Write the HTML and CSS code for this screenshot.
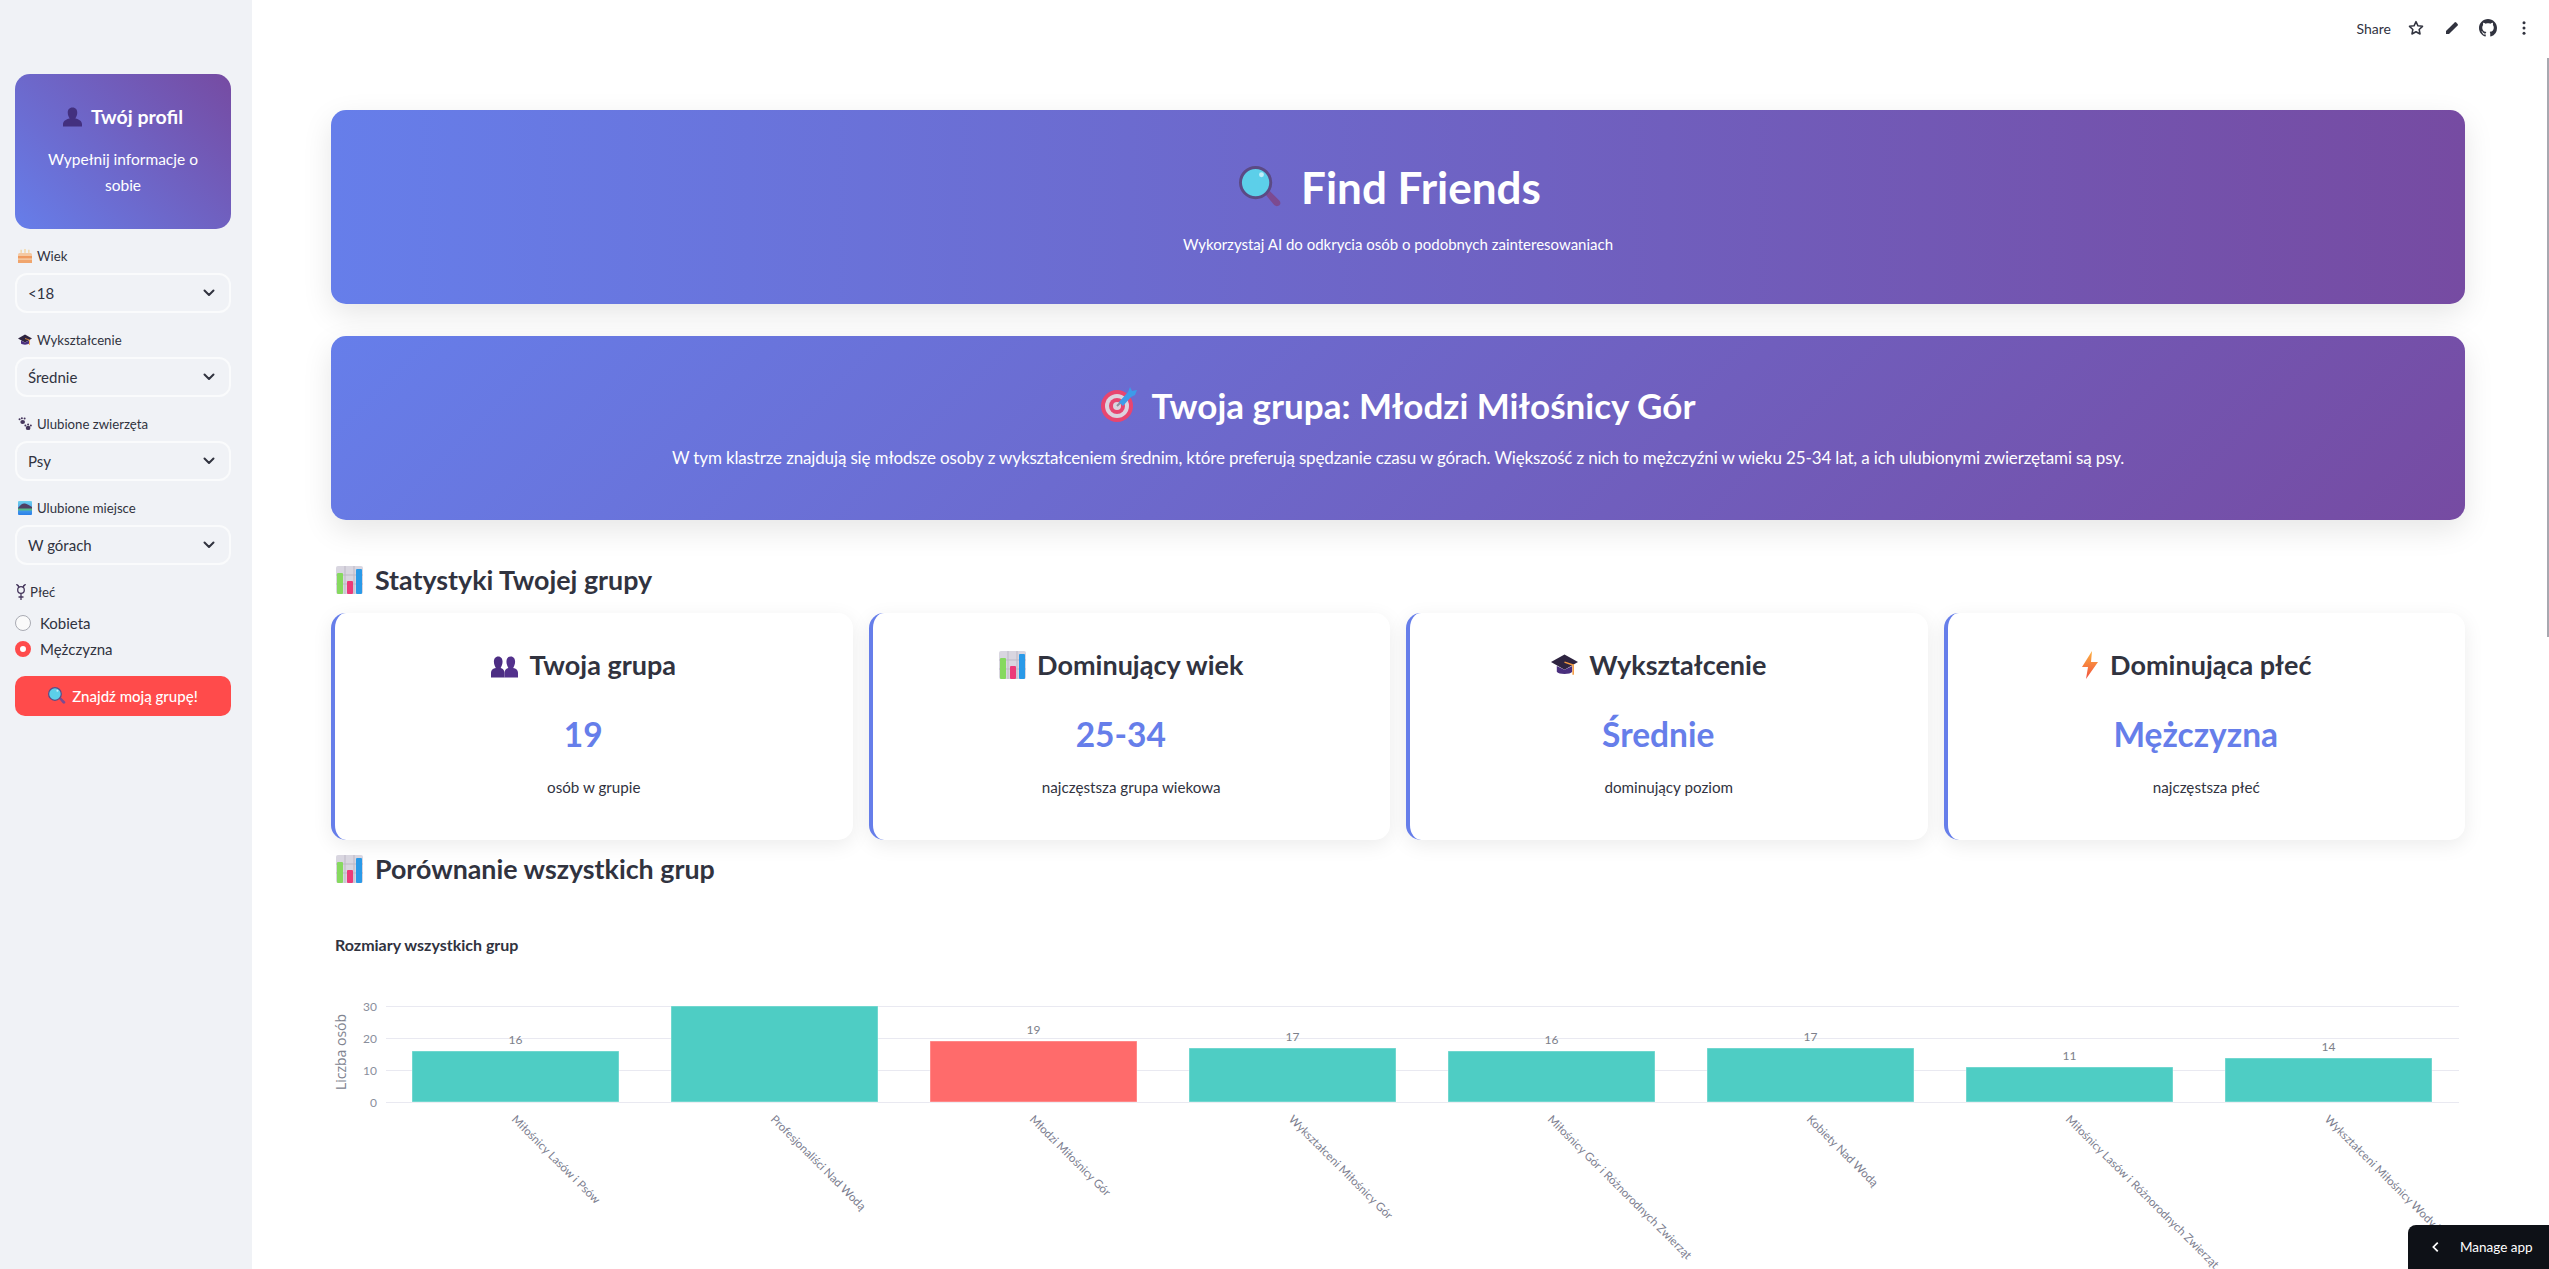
FILE: index.html
```html
<!DOCTYPE html>
<html lang="pl">
<head>
<meta charset="utf-8">
<title>Find Friends</title>
<link rel="stylesheet" href="styles.css">
</head>
<body>
<svg class="sprite" aria-hidden="true">
  <defs>
    <linearGradient id="bolt" x1="0" y1="0" x2="0" y2="1"><stop offset="0" stop-color="#fbb040"/><stop offset="1" stop-color="#f2503f"/></linearGradient>
    <linearGradient id="sky" x1="0" y1="0" x2="0" y2="1"><stop offset="0" stop-color="#6fd0ee"/><stop offset="1" stop-color="#2b7fe8"/></linearGradient>
  </defs>
  <symbol id="i-search" viewBox="0 0 44 44">
    <path d="M27 29l4-4 10 10c2 2 1.500 4 .5 5s-3.500 2-5.500 0z" fill="#7c4a90"/>
    <circle cx="17" cy="17" r="15.500" fill="#5ccfe9" stroke="#5b4a84" stroke-width="3"/>
    <circle cx="23" cy="9" r="2.500" fill="#bfeef8"/>
  </symbol>
  <symbol id="i-target" viewBox="0 0 36 36">
    <circle cx="16" cy="20" r="16" fill="#e8456f"/>
    <circle cx="16" cy="20" r="12" fill="#dcd3de"/>
    <circle cx="16" cy="20" r="8" fill="#e8456f"/>
    <circle cx="16" cy="20" r="4" fill="#dcd3de"/>
    <path d="M16 20L27 9" stroke="#8a8f9c" stroke-width="2"/>
    <path d="M18 16L27 6l2-5 2 4 5-1-2 5-4 2-8 9z" fill="#3d9be9"/>
  </symbol>
  <symbol id="i-chart" viewBox="0 0 27 28">
    <rect width="27" height="28" rx="2" fill="#d9d6e0"/>
    <path d="M9 0v28M18 0v28M0 9h27M0 18h27" stroke="#bdb9c6" stroke-width="1"/>
    <rect x="1" y="7" width="6" height="21" rx="1" fill="#86d95f"/>
    <rect x="11" y="15" width="6" height="13" rx="1" fill="#ec3a79"/>
    <rect x="20" y="3" width="6" height="25" rx="1" fill="#2a9ae8"/>
  </symbol>
  <symbol id="i-people" viewBox="0 0 28 22">
    <path d="M7.500 0c3 0 4.500 2.500 4.500 5.500S10.500 11 10 12c2 .5 4 2 4 5v5H0v-5c0-3 2-4.500 5-5-.5-1-2-3.500-2-6.500S4.500 0 7.500 0z" fill="#4c2d83"/>
    <path d="M20.500 0c3 0 4.500 2.500 4.500 5.500S23.500 11 23 12c3 .5 5 2 5 5v5H14v-5c0-3 2-4.500 4-5-.5-1-2-3.500-2-6.500S17.500 0 20.500 0z" fill="#53318c"/>
  </symbol>
  <symbol id="i-person" viewBox="0 0 20 20">
    <path d="M10 0c3.500 0 5 2.500 5 5.500S13.500 10.500 13 11.500c4 .8 7 3 7 6V20H0v-2.500c0-3 3-5.200 7-6-.5-1-2-3-2-6S6.500 0 10 0z" fill="#43307f"/>
  </symbol>
  <symbol id="i-cap" viewBox="0 0 28 28">
    <path d="M14 3L28 11 14 19 0 11z" fill="#2e2440"/>
    <path d="M6 15v6c2 3 14 3 16 0v-6l-8 4z" fill="#4a2f7e"/>
    <path d="M14 11l9 3v10" fill="none" stroke="#f59a3e" stroke-width="1.600"/>
  </symbol>
  <symbol id="i-bolt" viewBox="0 0 18 28">
    <path d="M11 0L1 16h6l-2 12 12-17h-7z" fill="url(#bolt)"/>
  </symbol>
  <symbol id="i-cake" viewBox="0 0 18 18">
    <path d="M4 1v4M9 0v5M14 1v4" stroke="#f3c063" stroke-width="1"/>
    <path d="M2 5h14a2 2 0 0 1 2 2v11H0V7a2 2 0 0 1 2-2z" fill="#f4c9a2"/>
    <rect y="9" width="18" height="3" fill="#ef9a5f"/>
    <rect y="14" width="18" height="4" fill="#f0a56d"/>
  </symbol>
  <symbol id="i-paws" viewBox="0 0 18 18">
    <g fill="#45365c">
      <ellipse cx="6" cy="6.500" rx="3" ry="2.500"/><circle cx="2" cy="3" r="1.300"/><circle cx="5" cy="1.500" r="1.300"/><circle cx="8.500" cy="2" r="1.300"/>
      <ellipse cx="13" cy="14" rx="3" ry="2.800"/><circle cx="9.500" cy="11" r="1.300"/><circle cx="13" cy="9.500" r="1.300"/><circle cx="16.500" cy="11" r="1.300"/>
    </g>
  </symbol>
  <symbol id="i-photo" viewBox="0 0 14 14">
    <rect width="14" height="14" rx="1" fill="url(#sky)"/>
    <path d="M0 7C3 3 5 2 7 2.500s4 1.500 7 3.500v2H0z" fill="#4f3f63"/>
    <rect y="7.500" width="14" height="2" fill="#55b98a"/>
  </symbol>
  <symbol id="i-gender" viewBox="0 0 12 16">
    <g fill="none" stroke="#45365c" stroke-width="1.300">
      <circle cx="6" cy="6" r="3.300"/>
      <path d="M6 9.300V16M3.500 13h5M3 1l1 2.500M9 1L8 3.500M1.500 0L3 2M10.500 0L9 2"/>
    </g>
  </symbol>
  <symbol id="i-chevron" viewBox="0 0 16 16">
    <path d="M3.500 5.500L8 10l4.500-4.500" fill="none" stroke="#31333f" stroke-width="2" stroke-linecap="round" stroke-linejoin="round"/>
  </symbol>
</svg>

<div class="app">
  <aside class="sidebar">
    <div class="profile-card">
      <h2 class="profile-title"><svg class="ic-person"><use href="#i-person"/></svg>Twój profil</h2>
      <p class="profile-text">Wypełnij informacje o sobie</p>
    </div>
    <div class="field">
      <label class="field-label"><svg class="ic-label"><use href="#i-cake"/></svg>Wiek</label>
      <div class="select"><span>&lt;18</span><svg class="ic-chevron"><use href="#i-chevron"/></svg></div>
    </div>
    <div class="field">
      <label class="field-label"><svg class="ic-label"><use href="#i-cap"/></svg>Wykształcenie</label>
      <div class="select"><span>Średnie</span><svg class="ic-chevron"><use href="#i-chevron"/></svg></div>
    </div>
    <div class="field">
      <label class="field-label"><svg class="ic-label"><use href="#i-paws"/></svg>Ulubione zwierzęta</label>
      <div class="select"><span>Psy</span><svg class="ic-chevron"><use href="#i-chevron"/></svg></div>
    </div>
    <div class="field">
      <label class="field-label"><svg class="ic-label"><use href="#i-photo"/></svg>Ulubione miejsce</label>
      <div class="select"><span>W górach</span><svg class="ic-chevron"><use href="#i-chevron"/></svg></div>
    </div>
    <div class="field field-radio">
      <label class="field-label field-label-gender"><svg class="ic-gender"><use href="#i-gender"/></svg>Płeć</label>
      <div class="radio-row"><span class="radio"></span>Kobieta</div>
      <div class="radio-row"><span class="radio radio-on"></span>Mężczyzna</div>
    </div>
    <div class="cta"><svg class="ic-cta"><use href="#i-search"/></svg>Znajdź moją grupę!</div>
  </aside>

  <main class="main">
    <header class="toolbar">
      <span class="share">Share</span>
      <svg class="tool" viewBox="0 0 24 24"><path d="M12 3.500l2.600 5.600 6.100.7-4.500 4.200 1.200 6L12 17l-5.400 3 1.200-6-4.500-4.200 6.100-.7z" fill="none" stroke="#31333f" stroke-width="2" stroke-linejoin="round"/></svg>
      <svg class="tool" viewBox="0 0 24 24"><path d="M4 20v-4L15.500 4.500a1.500 1.500 0 0 1 2 0l2 2a1.500 1.500 0 0 1 0 2L8 20z" fill="#31333f"/></svg>
      <svg class="tool" viewBox="0 0 16 16"><path fill="#31333f" d="M8 0C3.580 0 0 3.580 0 8c0 3.540 2.290 6.530 5.470 7.590.4.070.55-.17.55-.38 0-.19-.01-.82-.01-1.490-2.010.37-2.530-.49-2.690-.94-.09-.23-.48-.94-.82-1.130-.28-.15-.68-.52-.01-.53.63-.01 1.080.58 1.230.82.720 1.210 1.870.870 2.330.660.070-.520.280-.870.510-1.070-1.780-.2-3.640-.89-3.640-3.950 0-.870.310-1.590.820-2.150-.080-.2-.360-1.020.080-2.120 0 0 .670-.210 2.200.820.640-.180 1.320-.270 2-.270s1.360.090 2 .270c1.530-1.040 2.200-.820 2.200-.820.440 1.100.160 1.920.080 2.120.510.560.820 1.270.820 2.150 0 3.070-1.870 3.750-3.650 3.950.290.250.540.730.540 1.480 0 1.070-.010 1.930-.010 2.200 0 .210.150.460.550.380A8.010 8.010 0 0 0 16 8c0-4.420-3.580-8-8-8z"/></svg>
      <svg class="tool" viewBox="0 0 24 24"><g fill="#31333f"><circle cx="12" cy="5" r="2"/><circle cx="12" cy="12" r="2"/><circle cx="12" cy="19" r="2"/></g></svg>
    </header>

    <section class="hero hero-top">
      <h1 class="hero-title"><svg class="ic-hero"><use href="#i-search"/></svg>Find Friends</h1>
      <p class="hero-sub">Wykorzystaj AI do odkrycia osób o podobnych zainteresowaniach</p>
    </section>

    <section class="hero hero-group">
      <h2 class="group-title"><svg class="ic-target"><use href="#i-target"/></svg>Twoja grupa: Młodzi Miłośnicy Gór</h2>
      <p class="group-sub">W tym klastrze znajdują się młodsze osoby z wykształceniem średnim, które preferują spędzanie czasu w górach. Większość z nich to mężczyźni w wieku 25-34 lat, a ich ulubionymi zwierzętami są psy.</p>
    </section>

    <h3 class="section-title section-stats"><svg class="ic-chart"><use href="#i-chart"/></svg>Statystyki Twojej grupy</h3>

    <div class="cards">
      <article class="card">
        <h3 class="card-title"><svg class="ic-people"><use href="#i-people"/></svg>Twoja grupa</h3>
        <div class="card-value">19</div>
        <p class="card-sub">osób w grupie</p>
      </article>
      <article class="card">
        <h3 class="card-title"><svg class="ic-chart"><use href="#i-chart"/></svg>Dominujący wiek</h3>
        <div class="card-value">25-34</div>
        <p class="card-sub">najczęstsza grupa wiekowa</p>
      </article>
      <article class="card">
        <h3 class="card-title"><svg class="ic-cardcap"><use href="#i-cap"/></svg>Wykształcenie</h3>
        <div class="card-value">Średnie</div>
        <p class="card-sub">dominujący poziom</p>
      </article>
      <article class="card">
        <h3 class="card-title"><svg class="ic-bolt"><use href="#i-bolt"/></svg>Dominująca płeć</h3>
        <div class="card-value">Mężczyzna</div>
        <p class="card-sub">najczęstsza płeć</p>
      </article>
    </div>

    <h3 class="section-title section-compare"><svg class="ic-chart"><use href="#i-chart"/></svg>Porównanie wszystkich grup</h3>

    <svg class="chart" viewBox="331 889 2134 380">
      <text class="chart-title" x="335" y="951">Rozmiary wszystkich grup</text>
      <g class="grid">
        <line x1="386" x2="2459" y1="1006.500" y2="1006.500"/>
        <line x1="386" x2="2459" y1="1038.500" y2="1038.500"/>
        <line x1="386" x2="2459" y1="1070.500" y2="1070.500"/>
        <line x1="386" x2="2459" y1="1102.500" y2="1102.500"/>
      </g>
      <g class="ticks">
        <text x="377" y="1011">30</text><text x="377" y="1043">20</text><text x="377" y="1075">10</text><text x="377" y="1107">0</text>
      </g>
      <text class="axis-title" transform="translate(346 1052) rotate(-90)">Liczba osób</text>
      <g class="bars">
        <rect x="412" y="1051" width="207" height="51"/>
        <rect x="671" y="1006" width="207" height="96"/>
        <rect class="bar-me" x="930" y="1041" width="207" height="61"/>
        <rect x="1189" y="1048" width="207" height="54"/>
        <rect x="1448" y="1051" width="207" height="51"/>
        <rect x="1707" y="1048" width="207" height="54"/>
        <rect x="1966" y="1067" width="207" height="35"/>
        <rect x="2225" y="1058" width="207" height="44"/>
      </g>
      <g class="values">
        <text x="515.500" y="1044">16</text>
        <text x="1033.500" y="1034">19</text>
        <text x="1292.500" y="1041">17</text>
        <text x="1551.500" y="1044">16</text>
        <text x="1810.500" y="1041">17</text>
        <text x="2069.500" y="1060">11</text>
        <text x="2328.500" y="1051">14</text>
      </g>
      <g class="xlabels">
        <text transform="translate(511 1120) rotate(45)">Miłośnicy Lasów i Psów</text>
        <text transform="translate(770 1120) rotate(45)">Profesjonaliści Nad Wodą</text>
        <text transform="translate(1029 1120) rotate(45)">Młodzi Miłośnicy Gór</text>
        <text transform="translate(1288 1120) rotate(45)">Wykształceni Miłośnicy Gór</text>
        <text transform="translate(1547 1120) rotate(45)">Miłośnicy Gór i Różnorodnych Zwierząt</text>
        <text transform="translate(1806 1120) rotate(45)">Kobiety Nad Wodą</text>
        <text transform="translate(2065 1120) rotate(45)">Miłośnicy Lasów i Różnorodnych Zwierząt</text>
        <text transform="translate(2324 1120) rotate(45)">Wykształceni Miłośnicy Wody i</text>
      </g>
    </svg>
  </main>
</div>
<div class="scroll-thumb"></div>
<div class="manage"><svg class="manage-chev" viewBox="0 0 16 16"><path d="M10 3L5 8l5 5" fill="none" stroke="#fff" stroke-width="2"/></svg>Manage app</div>
</body>
</html>
```

FILE: styles.css
```css
* { box-sizing: border-box; }
html, body { margin: 0; height: 100%; overflow: hidden; background: #fff; }
body { font-family: "Lato", "Noto Sans", sans-serif; color: #31333f; font-size: 16px; }
h1, h2, h3, p { margin: 0; }
.sprite { position: absolute; width: 0; height: 0; }
svg { flex: none; }

.app { display: flex; height: 100vh; overflow: hidden; }

/* sidebar */
.sidebar { width: 252px; flex: none; background: #f0f2f6; padding: 74px 21px 0 15px; display: flex; flex-direction: column; gap: 17px; }
.profile-card { height: 155px; border-radius: 15px; background: linear-gradient(45deg, #667eea, #764ba2); color: #fff; text-align: center; padding: 30px 30px 0; }
.profile-title { font-size: 19.500px; line-height: 26px; font-weight: 700; display: flex; align-items: center; justify-content: center; gap: 9px; white-space: nowrap; }
.ic-person { width: 19px; height: 20px; }
.profile-text { font-size: 15.500px; line-height: 26px; margin-top: 16px; }
.field { display: flex; flex-direction: column; }
.field-label { height: 20px; margin-bottom: 7px; font-size: 13.200px; line-height: 20px; display: flex; align-items: center; gap: 5px; padding-left: 3px; }
.ic-label { width: 14px; height: 14px; }
.select { height: 40px; border: 2px solid #fafbfc; border-radius: 12px; padding: 0 12px 0 11px; display: flex; align-items: center; justify-content: space-between; font-size: 15px; }
.ic-chevron { width: 16px; height: 16px; }
.field-label-gender { padding-left: 0; gap: 3px; margin-bottom: 8px; }
.ic-gender { width: 12px; height: 16px; }
.field-radio { margin-bottom: -3px; }
.radio-row { height: 26px; display: flex; align-items: center; gap: 9px; font-size: 15px; }
.radio { width: 16px; height: 16px; border-radius: 50%; background: #fafafa; border: 1px solid #a9abb3; }
.radio-on { background: #fff; border: 5px solid #ff4b4b; }
.cta { height: 40px; border-radius: 10px; background: #ff4b4b; color: #fff; font-size: 15px; font-weight: 500; display: flex; align-items: center; justify-content: center; gap: 6px; }
.ic-cta { width: 18px; height: 18px; }

/* main */
.main { flex: 1; min-width: 0; padding: 110px 84px 0 79px; position: relative; }
.toolbar { position: absolute; top: 16px; right: 16px; display: flex; align-items: center; height: 24px; gap: 18px; }
.share { font-size: 14px; margin-right: -2px; }
.tool { width: 18px; height: 18px; }

.hero { border-radius: 15px; color: #fff; text-align: center; box-shadow: 0 10px 30px rgba(0, 0, 0, .1); }
.hero-top { height: 194px; padding-top: 47px; margin-bottom: 32px; background: linear-gradient(90deg, #667eea, #764ba2); }
.hero-title { font-size: 44px; line-height: 60px; font-weight: 700; display: flex; align-items: center; justify-content: center; gap: 19px; padding-right: 16px; }
.ic-hero { width: 43px; height: 43px; }
.hero-sub { font-size: 15px; line-height: 26px; margin-top: 14px; }
.hero-group { height: 184px; padding-top: 44px; background: linear-gradient(135deg, #667eea, #764ba2); }
.group-title { font-size: 35px; line-height: 50px; font-weight: 700; display: flex; align-items: center; justify-content: center; gap: 15px; }
.ic-target { width: 36px; height: 36px; margin-top: -3px; }
.group-sub { font-size: 17px; line-height: 28px; letter-spacing: -.15px; margin-top: 14px; }

.section-title { font-size: 26.800px; line-height: 40px; font-weight: 700; display: flex; align-items: center; gap: 12px; padding-left: 5px; }
.section-stats { margin-top: 40px; }
.section-compare { margin-top: 9px; }
.ic-chart { width: 27px; height: 28px; }

.cards { display: grid; grid-template-columns: repeat(4, 1fr); gap: 16px; margin-top: 13px; }
.card { height: 227px; background: #fff; border-left: 4px solid #667eea; border-radius: 15px; box-shadow: 0 5px 20px rgba(0, 0, 0, .08); padding: 32px 0 0; text-align: center; }
.card-title { font-size: 27px; line-height: 40px; font-weight: 700; display: flex; align-items: center; justify-content: center; gap: 11px; padding-right: 20px; }
.ic-people { width: 27px; height: 22px; margin-top: 4px; }
.ic-cardcap { width: 27px; height: 28px; }
.ic-bolt { width: 18px; height: 28px; }
.card-value { font-size: 33.500px; line-height: 50px; font-weight: 700; color: #667eea; margin-top: 24px; padding-right: 21px; }
.card-sub { font-size: 15.200px; line-height: 26px; margin-top: 15px; }

/* chart */
.chart { display: block; width: 2134px; height: 380px; }
.chart-title { font-size: 16px; font-weight: 700; fill: #31333f; }
.grid line { stroke: #e9e9f1; stroke-width: 1; }
.ticks text { font-size: 12px; fill: #8a8e9c; text-anchor: end; }
.axis-title { font-family: "Open Sans", sans-serif; font-size: 14px; fill: #80838f; text-anchor: middle; }
.bars rect { fill: #4ecdc4; stroke: #ffffff; stroke-opacity: .4; stroke-width: 1; }
.bars .bar-me { fill: #ff6b6b; }
.values text { font-size: 12px; fill: #7d7f8a; text-anchor: middle; }
.xlabels text { font-size: 11.500px; fill: #7d8090; }

/* overlays */
.scroll-thumb { position: fixed; top: 58px; right: 0; width: 2px; height: 579px; background: #a8a8b0; }
.manage { position: fixed; right: 0; bottom: 0; width: 141px; height: 44px; background: #0e1117; color: #fff; border-top-left-radius: 8px; font-size: 13.500px; display: flex; align-items: center; padding-left: 21px; gap: 17px; }
.manage-chev { width: 14px; height: 14px; }
```
